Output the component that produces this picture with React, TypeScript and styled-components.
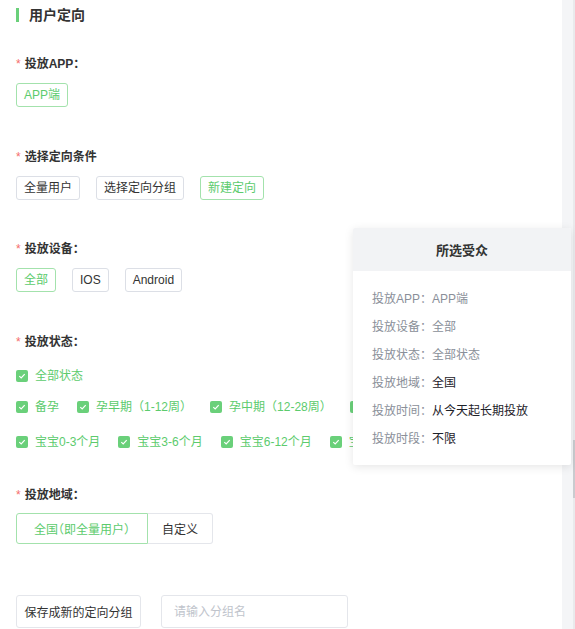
import React from "react";
import styled, { createGlobalStyle } from "styled-components";

const GREEN = "#5ccb6d";
const GREEN_BORDER = "#a3e2ac";

const Global = createGlobalStyle`
  html, body { margin: 0; padding: 0; background: #fff; }
  body {
    font-family: "Liberation Sans", "Noto Sans CJK SC", sans-serif;
    font-size: 12px;
    color: #333;
  }
`;

const Page = styled.div`
  position: relative;
  display: flex;
  width: 575px;
  height: 629px;
  overflow: hidden;
`;

const Content = styled.div`
  flex: 1;
  padding-left: 16px;
  overflow: hidden;
`;

const Gutter = styled.div`
  width: 11px;
  background: #f4f5f7;
`;

const ScrollTrack = styled.div`
  position: relative;
  width: 2px;
  background: #e9eaec;
`;

const ScrollThumb = styled.div`
  position: absolute;
  left: 0;
  top: 440px;
  width: 2px;
  height: 58px;
  background: #c9cbcf;
`;

const Header = styled.div`
  height: 29px;
  display: flex;
  align-items: center;
  gap: 10px;
`;

const Bar = styled.span`
  width: 3px;
  height: 14px;
  background: #6ad07a;
`;

const Title = styled.h2`
  margin: 0;
  font-size: 14px;
  line-height: 16px;
  font-weight: 700;
  color: #333;
`;

const Label = styled.div<{ $mt: number }>`
  margin-top: ${(p) => p.$mt}px;
  line-height: 16px;
  font-weight: 700;
  font-size: 12px;
  color: #333;
  font-feature-settings: "halt";
`;

const Star = styled.span`
  color: #f56c6c;
  font-weight: 400;
  margin-right: 4px;
`;

const ButtonRow = styled.div`
  margin-top: 11px;
  display: flex;
  gap: 16px;
`;

const OptionButton = styled.button<{ $active?: boolean }>`
  height: 24px;
  padding: 0 7px;
  border: 1px solid ${(p) => (p.$active ? GREEN_BORDER : "#dcdfe6")};
  border-radius: 3px;
  background: #fff;
  color: ${(p) => (p.$active ? GREEN : "#333")};
  font-family: inherit;
  font-size: 12px;
  line-height: 22px;
  cursor: pointer;
`;

const CheckRow = styled.div<{ $mt: number }>`
  margin-top: ${(p) => p.$mt}px;
  display: flex;
  gap: 18px;
  white-space: nowrap;
`;

const CheckItem = styled.label`
  display: flex;
  align-items: center;
  gap: 7px;
  line-height: 16px;
  color: ${GREEN};
  font-size: 12px;
  flex-shrink: 0;
`;

const Box = styled.span`
  width: 12px;
  height: 12px;
  border-radius: 2px;
  background: #6ad07a;
  display: flex;
  align-items: center;
  justify-content: center;
`;

const Segment = styled.div`
  margin-top: 10px;
  display: flex;
`;

const SegItem = styled.div<{ $active?: boolean; $pad: number }>`
  height: 31px;
  box-sizing: border-box;
  padding: 0 ${(p) => p.$pad}px;
  display: flex;
  align-items: center;
  border: 1px solid ${(p) => (p.$active ? GREEN_BORDER : "#e4e6eb")};
  ${(p) => (p.$active ? "" : "border-left: none;")}
  border-radius: ${(p) => (p.$active ? "3px 0 0 3px" : "0 3px 3px 0")};
  color: ${(p) => (p.$active ? GREEN : "#333")};
  font-feature-settings: "halt";
`;

const SaveRow = styled.div`
  margin-top: 51px;
  display: flex;
  gap: 20px;
`;

const SaveButton = styled.button`
  height: 33px;
  padding: 0 7.5px;
  border: 1px solid #e4e6eb;
  border-radius: 3px;
  background: #fff;
  color: #333;
  font-family: inherit;
  font-size: 12px;
`;

const Input = styled.input`
  width: 187px;
  height: 33px;
  box-sizing: border-box;
  padding: 0 12px;
  border: 1px solid #e4e6eb;
  border-radius: 3px;
  font-family: inherit;
  font-size: 12px;
  outline: none;
  &::placeholder { color: #c0c4cc; }
`;

const Card = styled.div`
  position: absolute;
  left: 353px;
  top: 228px;
  width: 218px;
  height: 237px;
  background: #fff;
  border-radius: 2px;
  box-shadow: 0 2px 10px rgba(0, 0, 0, 0.1);
  overflow: hidden;
`;

const CardHead = styled.div`
  height: 43px;
  background: #f2f3f5;
  display: flex;
  align-items: center;
  justify-content: center;
  font-weight: 700;
  font-size: 13px;
  color: #333;
`;

const CardBody = styled.div`
  padding: 14px 0 12px 19px;
`;

const InfoRow = styled.div`
  line-height: 28px;
  font-size: 12px;
  color: #8a8f99;
`;

const InfoValue = styled.span<{ $dark?: boolean }>`
  color: ${(p) => (p.$dark ? "#1d2129" : "#8a8f99")};
`;

const Check = () => (
  <Box>
    <svg width="8" height="8" viewBox="0 0 8 8">
      <path d="M1.3 4.1 L3.2 5.9 L6.7 2.2" stroke="#fff" strokeWidth="1.2" fill="none" />
    </svg>
  </Box>
);

const row2 = ["备孕", "孕早期（1-12周）", "孕中期（12-28周）", "孕晚期（28-40周）"];
const row3 = ["宝宝0-3个月", "宝宝3-6个月", "宝宝6-12个月", "宝宝1-3岁"];

const info: [string, string, boolean][] = [
  ["投放APP：", "APP端", false],
  ["投放设备：", "全部", false],
  ["投放状态：", "全部状态", false],
  ["投放地域：", "全国", true],
  ["投放时间：", "从今天起长期投放", true],
  ["投放时段：", "不限", true],
];

export default function App() {
  return (
    <Page>
      <Global />
      <Content>
        <Header>
          <Bar />
          <Title>用户定向</Title>
        </Header>

        <Label $mt={27}><Star>*</Star>投放APP：</Label>
        <ButtonRow>
          <OptionButton $active>APP端</OptionButton>
        </ButtonRow>

        <Label $mt={42}><Star>*</Star>选择定向条件</Label>
        <ButtonRow>
          <OptionButton>全量用户</OptionButton>
          <OptionButton>选择定向分组</OptionButton>
          <OptionButton $active>新建定向</OptionButton>
        </ButtonRow>

        <Label $mt={41}><Star>*</Star>投放设备：</Label>
        <ButtonRow>
          <OptionButton $active>全部</OptionButton>
          <OptionButton>IOS</OptionButton>
          <OptionButton>Android</OptionButton>
        </ButtonRow>

        <Label $mt={42}><Star>*</Star>投放状态：</Label>
        <CheckRow $mt={18}>
          <CheckItem><Check />全部状态</CheckItem>
        </CheckRow>
        <CheckRow $mt={15}>
          {row2.map((t) => (
            <CheckItem key={t}><Check />{t}</CheckItem>
          ))}
        </CheckRow>
        <CheckRow $mt={19}>
          {row3.map((t) => (
            <CheckItem key={t}><Check />{t}</CheckItem>
          ))}
        </CheckRow>

        <Label $mt={37}><Star>*</Star>投放地域：</Label>
        <Segment>
          <SegItem $active $pad={17}>全国（即全量用户）</SegItem>
          <SegItem $pad={14}>自定义</SegItem>
        </Segment>

        <SaveRow>
          <SaveButton>保存成新的定向分组</SaveButton>
          <Input placeholder="请输入分组名" />
        </SaveRow>
      </Content>
      <Gutter />
      <ScrollTrack>
        <ScrollThumb />
      </ScrollTrack>

      <Card>
        <CardHead>所选受众</CardHead>
        <CardBody>
          {info.map(([k, v, dark]) => (
            <InfoRow key={k}>
              {k}
              <InfoValue $dark={dark}>{v}</InfoValue>
            </InfoRow>
          ))}
        </CardBody>
      </Card>
    </Page>
  );
}
